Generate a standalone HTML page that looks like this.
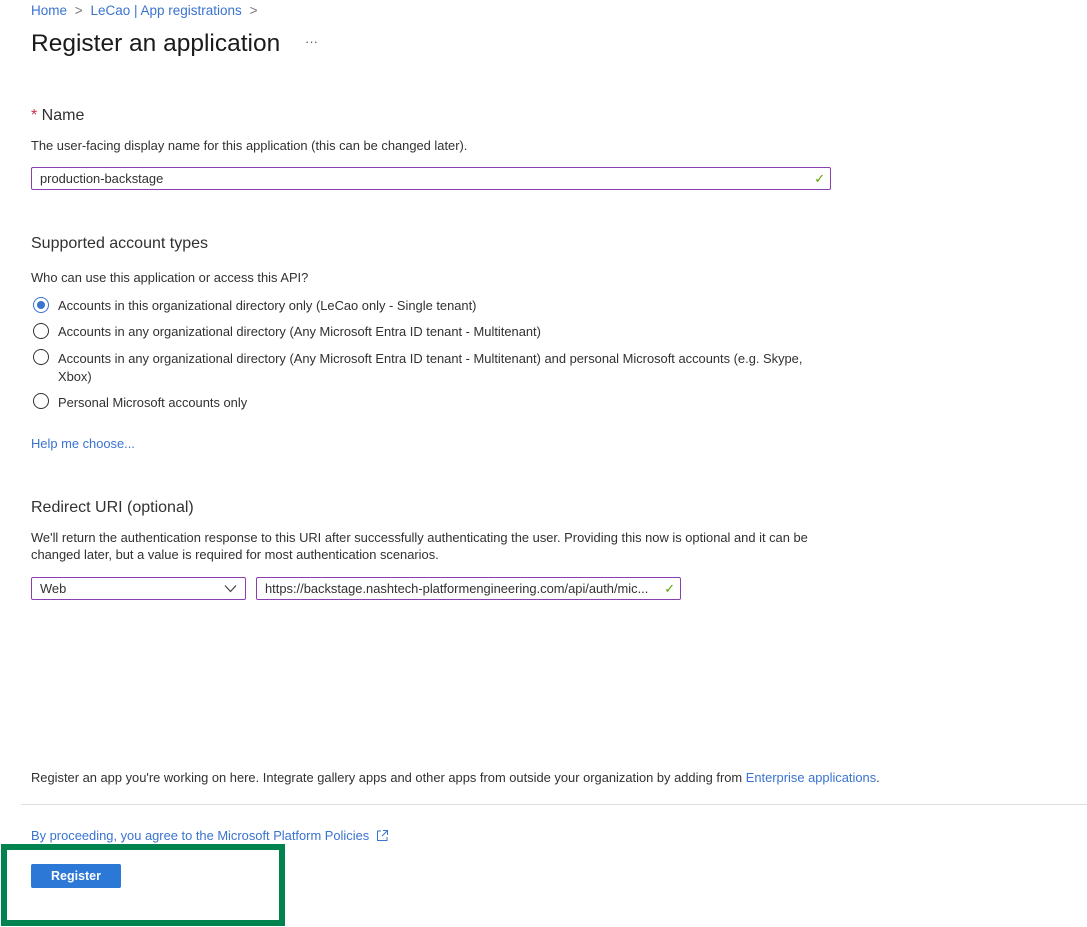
<!DOCTYPE html>
<html><head><meta charset="utf-8"><style>
body{margin:0;width:1087px;height:927px;background:#fff;font-family:"Liberation Sans",sans-serif;color:#323130;position:relative;overflow:hidden}
.a{position:absolute;white-space:nowrap}
.t{font-size:12.9px}
.lnk{color:#3a73d0}
.h{font-size:16px;color:#323130}
.box{position:absolute;border:1px solid #8a3fb1;border-radius:2px;box-sizing:border-box;font-size:12.9px;padding:0 8px;line-height:21px}
.r{position:absolute;width:16px;height:16px;border:1px solid #323130;border-radius:50%;box-sizing:border-box}
</style></head><body>
<div class="a t" style="left:31px;top:3px;font-size:13.5px"><span class="lnk">Home</span> <span style="color:#777;margin:0 4px">&gt;</span> <span class="lnk">LeCao | App registrations</span> <span style="color:#777;margin-left:4px">&gt;</span></div>
<div class="a" style="left:31px;top:30px;font-size:24.5px;color:#1b1a19">Register an application</div>
<div class="a" style="left:305px;top:34px;font-size:13px;color:#555">···</div>
<div class="a h" style="left:31px;top:107px"><span style="color:#c4314b">*</span> Name</div>
<div class="a t" style="left:31px;top:138px">The user-facing display name for this application (this can be changed later).</div>
<div class="box" style="left:31px;top:167px;width:800px;height:23px">production-backstage<span style="position:absolute;right:5px;color:#57a300">✓</span></div>
<div class="a h" style="left:31px;top:235px">Supported account types</div>
<div class="a t" style="left:31px;top:270px">Who can use this application or access this API?</div>
<div class="r" style="left:33px;top:297px;border-color:#3a73d0"><div style="position:absolute;left:3px;top:3px;width:8px;height:8px;border-radius:50%;background:#3a73d0"></div></div>
<div class="a t" style="left:58px;top:298px">Accounts in this organizational directory only (LeCao only - Single tenant)</div>
<div class="r" style="left:33px;top:323px"></div>
<div class="a t" style="left:58px;top:324px">Accounts in any organizational directory (Any Microsoft Entra ID tenant - Multitenant)</div>
<div class="r" style="left:33px;top:349px"></div>
<div class="a t" style="left:58px;top:350px;line-height:18px">Accounts in any organizational directory (Any Microsoft Entra ID tenant - Multitenant) and personal Microsoft accounts (e.g. Skype,<br>Xbox)</div>
<div class="r" style="left:33px;top:393px"></div>
<div class="a t" style="left:58px;top:395px">Personal Microsoft accounts only</div>
<div class="a t lnk" style="left:31px;top:436px">Help me choose...</div>
<div class="a h" style="left:31px;top:499px">Redirect URI (optional)</div>
<div class="a t" style="left:31px;top:529px;line-height:17px">We'll return the authentication response to this URI after successfully authenticating the user. Providing this now is optional and it can be<br>changed later, but a value is required for most authentication scenarios.</div>
<div class="box" style="left:31px;top:577px;width:215px;height:23px">Web<svg style="position:absolute;right:8px;top:6px" width="13" height="9"><path d="M1 1.5l5.5 6 5.5-6" fill="none" stroke="#444" stroke-width="1.2"/></svg></div>
<div class="box" style="left:256px;top:577px;width:425px;height:23px;overflow:hidden">https://backstage.nashtech-platformengineering.com/api/auth/mic...<span style="position:absolute;right:5px;color:#57a300;background:#fff">✓</span></div>
<div class="a t" style="left:31px;top:770px">Register an app you're working on here. Integrate gallery apps and other apps from outside your organization by adding from <span class="lnk">Enterprise applications</span>.</div>
<div class="a" style="left:21px;top:804px;width:1066px;height:1px;background:#ddd"></div>
<div class="a t lnk" style="left:31px;top:828px">By proceeding, you agree to the Microsoft Platform Policies <svg width="13" height="13" style="vertical-align:-2px;margin-left:3px"><path d="M5 2H1.5v9.5H11V8M7 1.5h4.5V6M11.5 1.5L6 7" fill="none" stroke="#3a73d0" stroke-width="1"/></svg></div>
<div class="a" style="left:31px;top:864px;width:90px;height:24px;background:#2b78d6;border-radius:2px;color:#fff;font-weight:bold;font-size:12.5px;text-align:center;line-height:24px">Register</div>
<div class="a" style="left:1px;top:844px;width:284px;height:82px;border:6px solid #00834f;box-sizing:border-box"></div>
</body></html>
